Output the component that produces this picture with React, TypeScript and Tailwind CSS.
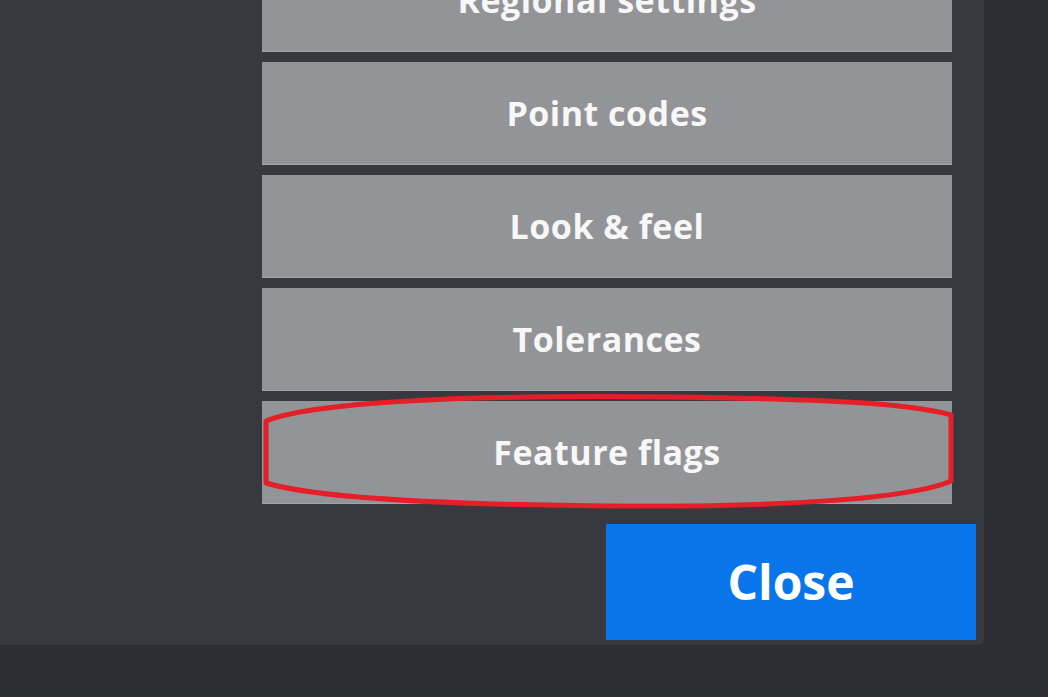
const items = ['Regional settings', 'Point codes', 'Look & feel', 'Tolerances', 'Feature flags']

export default function App() {
  return (
    <div className="h-[697px] w-full bg-[#2d2d35] overflow-hidden" style={{ fontFamily: '"Open Sans", "Noto Sans", sans-serif' }}>
      <div className="h-[645px] w-[984px] bg-[#383840] rounded-br-md overflow-hidden flex flex-col">
        <div className="mt-[-51px] ml-[262px] w-[690px] flex flex-col gap-[10px]">
          {items.map((label) => (
            <div key={label} className="relative">
              <button className="h-[103px] w-full bg-[#939497] border-b border-[#a3a4a7] text-[#f7f7f7] text-[34px] font-bold tracking-[0.5px] flex items-center justify-center">
                {label}
              </button>
              {label === 'Feature flags' && (
                <svg className="absolute left-[-2px] top-[-8px] pointer-events-none" width="698" height="120" viewBox="0 0 698 120">
                  <path
                    d="M6 28 C 60 6, 250 2, 410 4 C 560 6, 650 10, 691 22 L 691 88 C 650 106, 520 114, 360 113 C 200 112, 60 106, 6 90 Z"
                    fill="none"
                    stroke="#e41f27"
                    strokeWidth="5"
                    strokeLinejoin="round"
                  />
                </svg>
              )}
            </div>
          ))}
        </div>
        <div className="flex justify-end pr-[8px] mt-[20px]">
          <button className="h-[116px] w-[370px] bg-[#0875ea] text-white text-[48px] font-bold flex items-center justify-center">
            Close
          </button>
        </div>
      </div>
    </div>
  )
}
